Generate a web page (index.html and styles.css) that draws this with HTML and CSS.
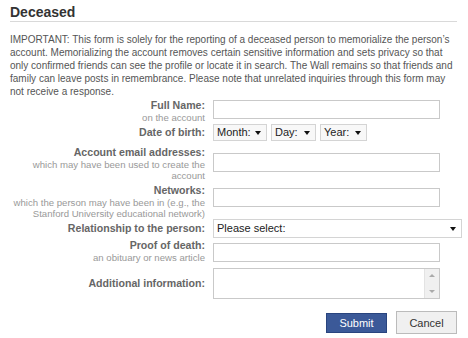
FILE: index.html
```html
<!DOCTYPE html>
<html lang="en">
<head>
    <meta charset="UTF-8">
    <title>Deceased</title>
    <link rel="stylesheet" href="styles.css">
</head>
<body>
    <div class="report">
        <h2 class="report-title">Deceased</h2>
        <p class="notice">IMPORTANT: This form is solely for the reporting of a deceased person to memorialize the person’s account. Memorializing the account removes certain sensitive information and sets privacy so that only confirmed friends can see the profile or locate it in search. The Wall remains so that friends and family can leave posts in remembrance. Please note that unrelated inquiries through this form may not receive a response.</p>

        <form class="report-form">
            <div class="row row-name">
                <label class="label">Full Name:<span class="hint">on the account</span></label>
                <div class="field"><input type="text" class="text-input"></div>
            </div>

            <div class="row row-dob">
                <label class="label">Date of birth:</label>
                <div class="field dob">
                    <span class="select-box month">Month:</span>
                    <span class="select-box day">Day:</span>
                    <span class="select-box year">Year:</span>
                </div>
            </div>

            <div class="row row-email">
                <label class="label">Account email addresses:<span class="hint">which may have been used to create the account</span></label>
                <div class="field"><input type="text" class="text-input"></div>
            </div>

            <div class="row row-networks">
                <label class="label">Networks:<span class="hint">which the person may have been in (e.g., the Stanford University educational network)</span></label>
                <div class="field"><input type="text" class="text-input"></div>
            </div>

            <div class="row row-relation">
                <label class="label">Relationship to the person:</label>
                <div class="field"><span class="select-box wide">Please select:</span></div>
            </div>

            <div class="row row-proof">
                <label class="label">Proof of death:<span class="hint">an obituary or news article</span></label>
                <div class="field"><input type="text" class="text-input"></div>
            </div>

            <div class="row row-info">
                <label class="label">Additional information:</label>
                <div class="field">
                    <div class="textarea-box">
                        <textarea class="textarea"></textarea>
                        <div class="scrollbar">
                            <span class="arrow up"></span>
                            <span class="arrow down"></span>
                        </div>
                    </div>
                </div>
            </div>

            <div class="buttons">
                <button type="button" class="btn btn-submit">Submit</button>
                <button type="button" class="btn btn-cancel">Cancel</button>
            </div>
        </form>
    </div>
</body>
</html>
```

FILE: styles.css
```css
body {
    margin: 0;
    background-color: #fff;
    font-family: "Liberation Sans", Arial, sans-serif;
    font-size: 10px;
    color: #555;
}

.report {
    padding: 4px 11px 0 0;
}

.report-title {
    margin: 0 0 0 10px;
    padding-bottom: 1px;
    border-bottom: 1px solid #d9d9d9;
    font-size: 14px;
    line-height: 16px;
    color: #333;
}

.notice {
    margin: 11px 0 0 10px;
    line-height: 13px;
    color: #555;
}

.report-form {
    margin-top: 1px;
}

.row {
    display: grid;
    grid-template-columns: 205px 1fr;
    column-gap: 8px;
    align-items: start;
}

.label {
    text-align: right;
    font-size: 10.6px;
    font-weight: bold;
    line-height: 13px;
    color: #666;
}

.hint {
    display: block;
    font-size: 9.6px;
    font-weight: normal;
    line-height: 11px;
    color: #999;
}

.text-input {
    display: block;
    box-sizing: border-box;
    width: 227px;
    height: 19px;
    margin: 0;
    border: 1px solid #c9c9c9;
    background: #fff;
}

.row-name .text-input { margin-top: 1px; }

.row-dob { margin-top: 1px; }
.row-dob .label { line-height: 17px; }

.dob {
    display: flex;
    gap: 4px;
}

.select-box {
    position: relative;
    display: block;
    box-sizing: border-box;
    height: 17px;
    padding: 0 0 0 3px;
    border: 1px solid #d4d4d4;
    background: #f8f8f8;
    font-size: 11px;
    line-height: 15px;
    color: #222;
}

.select-box::after {
    content: "";
    position: absolute;
    right: 5px;
    top: 6px;
    border-left: 3px solid transparent;
    border-right: 3px solid transparent;
    border-top: 4px solid #111;
}

.month { width: 54px; }
.day { width: 45px; }
.year { width: 47px; }

.row-email { margin-top: 5px; }
.row-email .text-input { margin-top: 7px; }

.row-networks { margin-top: 3px; }
.row-networks .text-input { margin-top: 4px; }

.row-relation .label { line-height: 19px; }

.select-box.wide {
    width: 249px;
    height: 19px;
    line-height: 17px;
    background: #fff;
}

.select-box.wide::after { top: 7px; }

.row-proof { margin-top: 1px; }
.row-proof .text-input { margin-top: 4px; }

.row-info {
    margin-top: 5px;
    align-items: center;
}

.textarea-box {
    display: flex;
    box-sizing: border-box;
    width: 227px;
    height: 31px;
    border: 1px solid #c9c9c9;
}

.textarea {
    flex: 1;
    margin: 0;
    padding: 0;
    border: none;
    resize: none;
    outline: none;
}

.scrollbar {
    display: flex;
    flex-direction: column;
    justify-content: space-between;
    align-items: center;
    width: 14px;
    padding: 5px 0;
    background: #f0f0f0;
    border-left: 1px solid #e3e3e3;
}

.arrow {
    width: 0;
    height: 0;
    border-left: 3px solid transparent;
    border-right: 3px solid transparent;
}

.arrow.up { border-bottom: 3px solid #aaa; }
.arrow.down { border-top: 3px solid #aaa; }

.buttons {
    display: flex;
    justify-content: flex-end;
    align-items: center;
    gap: 9px;
    margin-top: 12px;
}

.btn {
    box-sizing: border-box;
    font-family: "Liberation Sans", Arial, sans-serif;
    font-size: 11px;
    cursor: pointer;
}

.btn-submit {
    width: 61px;
    height: 20px;
    border: 1px solid #29447e;
    background-color: #3b5998;
    color: #fff;
}

.btn-cancel {
    width: 61px;
    height: 23px;
    border: 1px solid #bbb;
    background-color: #f0f0f0;
    color: #333;
}
```
